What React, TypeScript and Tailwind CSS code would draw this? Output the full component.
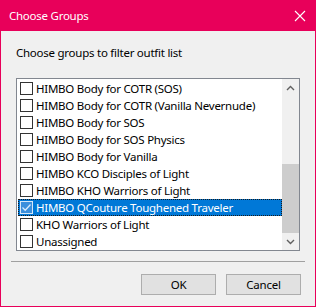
import React from "react";

const items: { label: string; checked?: boolean; selected?: boolean }[] = [
  { label: "HIMBO Body for COTR (SOS)" },
  { label: "HIMBO Body for COTR (Vanilla Nevernude)" },
  { label: "HIMBO Body for SOS" },
  { label: "HIMBO Body for SOS Physics" },
  { label: "HIMBO Body for Vanilla" },
  { label: "HIMBO KCO Disciples of Light" },
  { label: "HIMBO KHO Warriors of Light" },
  { label: "HIMBO QCouture Toughened Traveler", checked: true, selected: true },
  { label: "KHO Warriors of Light" },
  { label: "Unassigned" },
];

function Check({ checked, selected }: { checked?: boolean; selected?: boolean }) {
  return (
    <div
      className={`w-[13px] h-[13px] border flex items-center justify-center shrink-0 ${
        selected ? "border-[#d6e8f8] bg-[#3b8fdc]" : "border-[#333333] bg-white"
      }`}
    >
      {checked && (
        <svg width="11" height="11" viewBox="0 0 11 11">
          <path d="M1.5 5.5 L4.2 8.2 L9.5 2.5" stroke="#d9ecfc" strokeWidth="1.3" fill="none" />
        </svg>
      )}
    </div>
  );
}

export default function App() {
  return (
    <div
      className="w-[316px] h-[307px] bg-[#f0f0f0] border border-[#e8005a] border-t-0 flex flex-col text-[11.5px] tracking-[-0.25px] text-black"
      style={{ fontFamily: '"Noto Sans", sans-serif' }}
    >
      <div className="h-[31px] bg-[#e8005a] -mx-[1px] flex items-center justify-between pl-[9px] pr-[10px] shrink-0">
        <span className="text-white">Choose Groups</span>
        <svg width="12" height="12" viewBox="0 0 12 12">
          <path d="M1 1 L11 11 M11 1 L1 11" stroke="white" strokeWidth="1.1" />
        </svg>
      </div>
      <div className="pl-[15px] pt-[14px] h-[16px] leading-[16px] box-content">Choose groups to filter outfit list</div>
      <div className="ml-[15px] mt-[17px] w-[284px] h-[173px] border border-[#828790] bg-white flex">
        <div className="flex-1 pt-[1px] pl-[1px]">
          {items.map((it) => (
            <div
              key={it.label}
              className={`h-[17px] flex items-center pl-[1px] ${
                it.selected ? "bg-[#0078d7] text-white border border-dotted border-[#1a1a1a]" : "border border-transparent"
              }`}
            >
              <Check checked={it.checked} selected={it.selected} />
              <span className="leading-[15px] pl-[3px]">{it.label}</span>
            </div>
          ))}
        </div>
        <div className="w-[17px] bg-[#f0f0f0] flex flex-col">
          <div className="h-[17px] flex items-center justify-center">
            <svg width="9" height="6" viewBox="0 0 9 6">
              <path d="M1 5 L4.5 1.5 L8 5" stroke="#606060" strokeWidth="1.4" fill="none" />
            </svg>
          </div>
          <div className="h-[68px]" />
          <div className="h-[69px] bg-[#cdcdcd]" />
          <div className="flex-1 flex items-center justify-center">
            <svg width="9" height="6" viewBox="0 0 9 6">
              <path d="M1 1 L4.5 4.5 L8 1" stroke="#606060" strokeWidth="1.4" fill="none" />
            </svg>
          </div>
        </div>
      </div>
      <div className="mx-[10px] mt-[10px] h-[1px] bg-[#a0a0a0]" />
      <div className="flex justify-end gap-[10px] pr-[14px] mt-[12px]">
        <button className="w-[75px] h-[21px] bg-[#e1e1e1] border border-[#adadad] leading-[19px]">OK</button>
        <button className="w-[75px] h-[21px] bg-[#e1e1e1] border border-[#adadad] leading-[19px]">Cancel</button>
      </div>
    </div>
  );
}
